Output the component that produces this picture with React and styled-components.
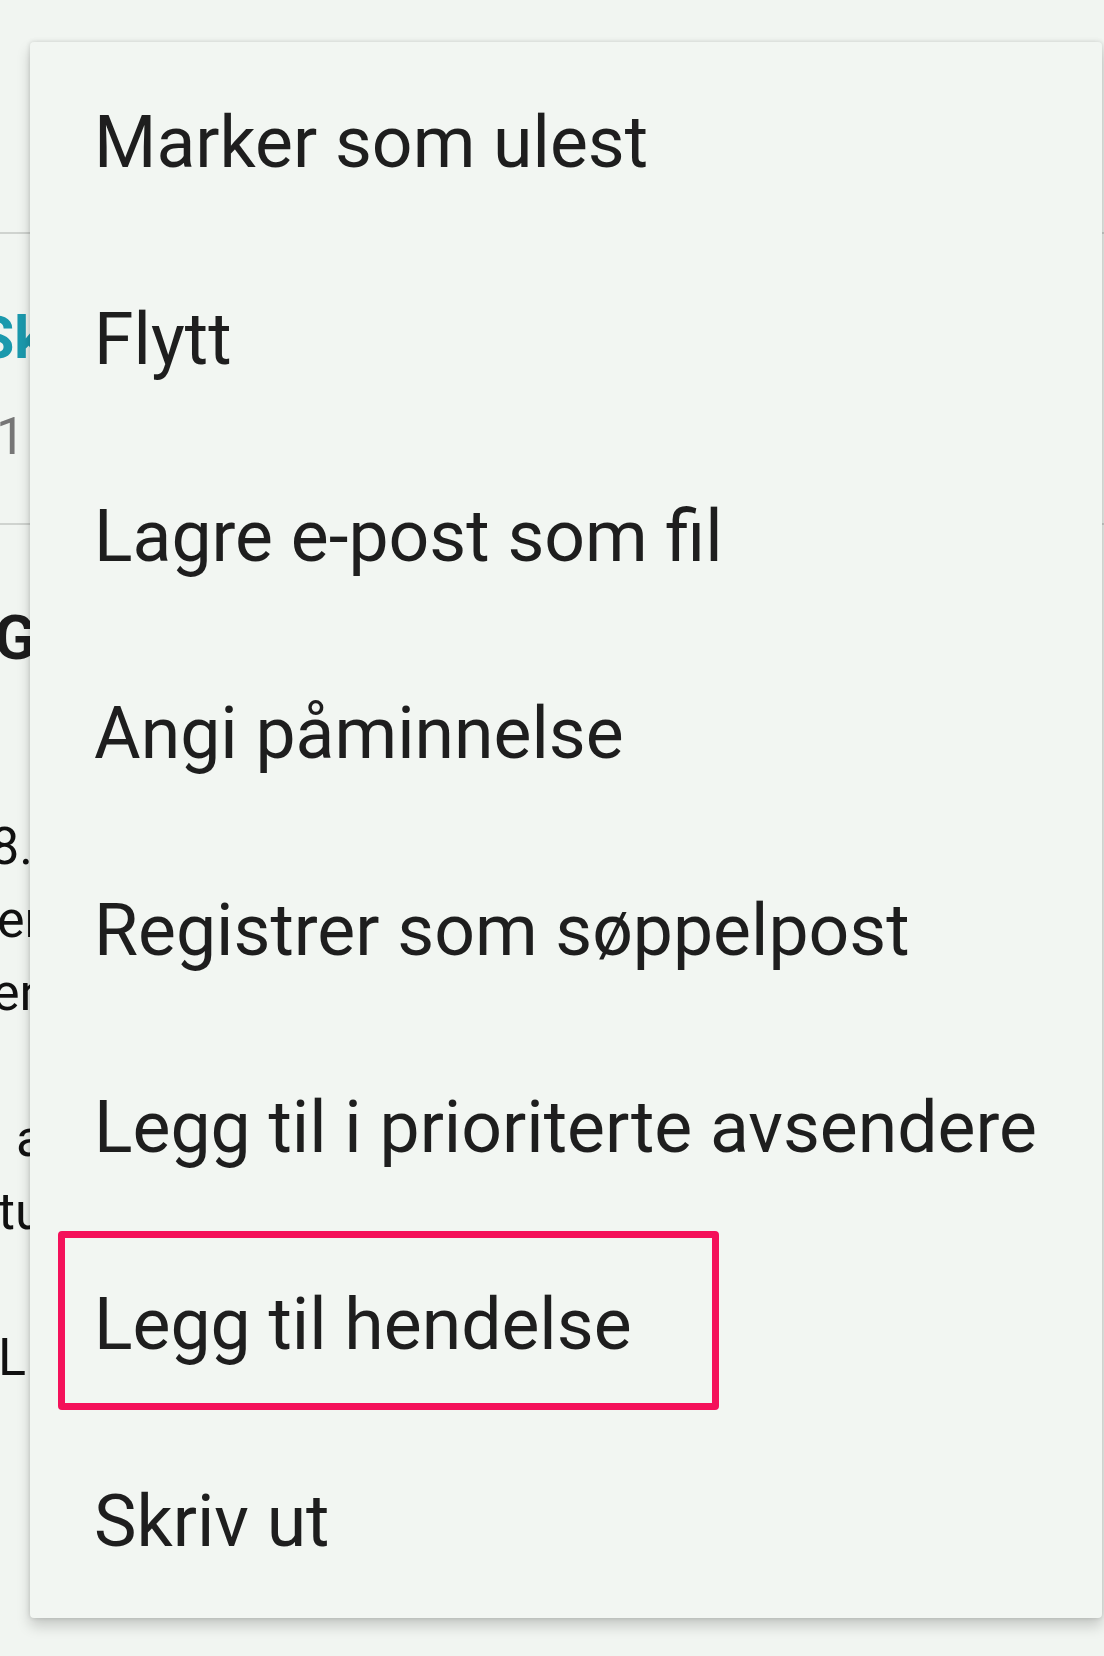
import React from 'react'
import { styled, createGlobalStyle } from 'styled-components'

const menuItems = [
    'Marker som ulest',
    'Flytt',
    'Lagre e-post som fil',
    'Angi påminnelse',
    'Registrer som søppelpost',
    'Legg til i prioriterte avsendere',
    'Legg til hendelse',
    'Skriv ut',
]

const bodyLines = [
    { text: '8. juni', shift: -10 },
    { text: 'er', shift: -3 },
    { text: 'en', shift: -8 },
    { text: '', shift: 0 },
    { text: 'alle', shift: 16 },
    { text: 'tur', shift: -2 },
    { text: '', shift: 0 },
    { text: 'L i', shift: -2 },
]

function App() {
    return (
        <Page>
            <GlobalStyle />
            <TopBar />
            <Sender>
                <SenderName $shift={-22}>Skolen</SenderName>
                <SenderDate $shift={-4}>1 time</SenderDate>
            </Sender>
            <Body>
                <Subject $shift={-6}>Gratulerer</Subject>
                <Lines>
                    {bodyLines.map((line, i) => (
                        <Line key={i} $shift={line.shift}>{line.text || '\u00a0'}</Line>
                    ))}
                </Lines>
            </Body>

            <Menu>
                {menuItems.map(item => (
                    <MenuItem key={item}>
                        {item}
                        {item === 'Legg til hendelse' && <Highlight />}
                    </MenuItem>
                ))}
            </Menu>
        </Page>
    )
}

const GlobalStyle = createGlobalStyle`
    body{
        margin: 0;
        background: #f1f5f1;
        font-family: Roboto, "Noto Sans", sans-serif;
        overflow: hidden;
    }
`

const Page = styled.div`
    position: relative;
    width: 1104px;
    height: 1656px;
    overflow: hidden;
    background: #f1f5f1;
`

const TopBar = styled.div`
    height: 232px;
    border-bottom: 2px solid #cfd3cf;
`

const Sender = styled.div`
    height: 291px;
    padding-top: 69px;
    box-sizing: border-box;
    border-bottom: 2px solid #cfd3cf;
    display: flex;
    flex-direction: column;
    gap: 29px;
`

const SenderName = styled.div`
    font-size: 59px;
    line-height: 70px;
    font-weight: 700;
    color: #1b99ad;
    margin-left: ${p => p.$shift}px;
    white-space: nowrap;
`

const SenderDate = styled.div`
    font-size: 52px;
    line-height: 70px;
    color: #767676;
    margin-left: ${p => p.$shift}px;
    white-space: nowrap;
`

const Body = styled.div`
    padding-top: 78px;
`

const Subject = styled.div`
    font-size: 62px;
    line-height: 70px;
    font-weight: 700;
    color: #1c1c1c;
    margin-left: ${p => p.$shift}px;
    white-space: nowrap;
`

const Lines = styled.div`
    margin-top: 137px;
`

const Line = styled.div`
    font-size: 52px;
    line-height: 73px;
    color: #111;
    margin-left: ${p => p.$shift}px;
    white-space: nowrap;
`

const Menu = styled.div`
    position: absolute;
    top: 42px;
    left: 30px;
    width: 1072px;
    background: #f2f6f2;
    border-radius: 4px;
    box-shadow: 0 8px 14px rgba(0, 0, 0, 0.18), 0 0 5px rgba(0, 0, 0, 0.14);
    z-index: 2;
`

const MenuItem = styled.div`
    position: relative;
    height: 197px;
    display: flex;
    align-items: center;
    padding-left: 64px;
    padding-top: 4px;
    box-sizing: border-box;
    font-size: 71.5px;
    color: #1e1e1e;
    white-space: nowrap;
`

const Highlight = styled.div`
    position: absolute;
    top: 7px;
    bottom: 11px;
    left: 28px;
    width: 661px;
    border: 7px solid #f4115a;
    border-radius: 4px;
    box-sizing: border-box;
`

export default App
